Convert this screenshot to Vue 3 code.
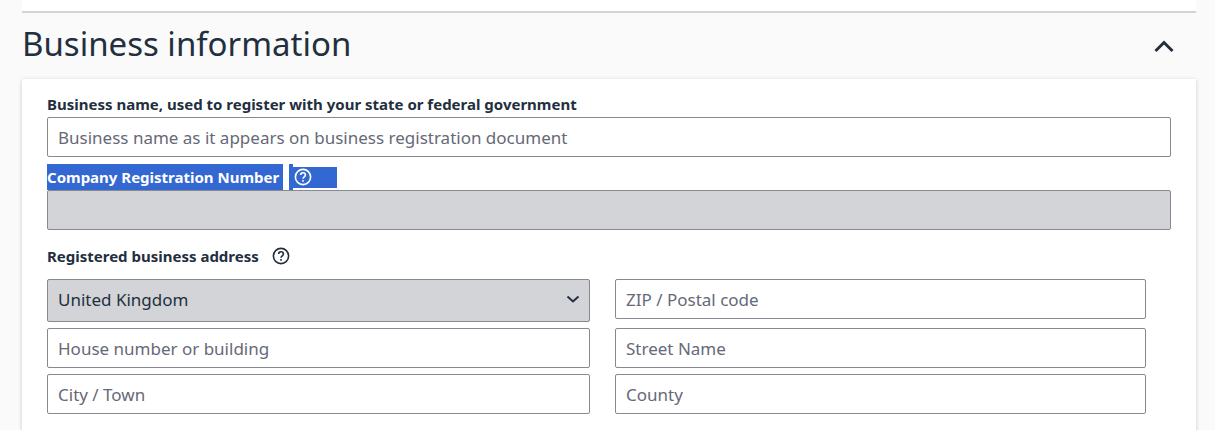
<script setup>
import { ref } from 'vue'

const open = ref(true)
const businessName = ref('')
const country = ref('United Kingdom')
const zip = ref('')
const house = ref('')
const street = ref('')
const city = ref('')
const county = ref('')
</script>

<template>
  <main class="page">
    <div class="previous"></div>
    <header class="heading">
      <h1>Business information</h1>
      <button class="toggle" type="button" aria-label="Toggle section" :aria-expanded="open" @click="open = !open">
        <svg width="24" height="24" viewBox="0 0 24 24"><path d="M3.500 17 12 8.500l8.500 8.500" /></svg>
      </button>
    </header>
    <form v-show="open" class="card" @submit.prevent>
      <label class="label" for="name">Business name, used to register with your state or federal government</label>
      <input id="name" v-model="businessName" class="field" type="text" placeholder="Business name as it appears on business registration document" />

      <div class="label-row">
        <label class="label selected" for="crn">Company Registration Number</label>
        <span class="selected-edge"></span>
        <span class="selected-help">
          <button class="help" type="button" aria-label="Company Registration Number help">
            <svg width="20" height="20" viewBox="0 0 20 20"><circle cx="10" cy="10" r="7.600" /><path d="M7.600 8.100c0-1.500 1-2.400 2.400-2.400s2.400.9 2.400 2.200c0 1.900-2.400 1.900-2.400 3.900" /><path d="M10 13.100v1.700" /></svg>
          </button>
        </span>
      </div>
      <input id="crn" class="field" type="text" disabled />

      <div class="address-row">
        <span id="address" class="label">Registered business address</span>
        <button class="help" type="button" aria-label="Registered business address help">
          <svg width="20" height="20" viewBox="0 0 20 20"><circle cx="10" cy="10" r="7.600" /><path d="M7.600 8.100c0-1.500 1-2.400 2.400-2.400s2.400.9 2.400 2.200c0 1.900-2.400 1.900-2.400 3.900" /><path d="M10 13.100v1.700" /></svg>
        </button>
      </div>
      <div class="address" role="group" aria-labelledby="address">
        <div class="select">
          <select v-model="country" class="field" aria-label="Country" disabled>
            <option>United Kingdom</option>
          </select>
          <svg class="chevron" width="16" height="16" viewBox="0 0 16 16"><path d="m2.500 5.500 5.500 5 5.500-5" /></svg>
        </div>
        <input v-model="zip" class="field" type="text" placeholder="ZIP / Postal code" aria-label="ZIP / Postal code" />
        <input v-model="house" class="field" type="text" placeholder="House number or building" aria-label="House number or building" />
        <input v-model="street" class="field" type="text" placeholder="Street Name" aria-label="Street Name" />
        <input v-model="city" class="field" type="text" placeholder="City / Town" aria-label="City / Town" />
        <input v-model="county" class="field" type="text" placeholder="County" aria-label="County" />
      </div>
    </form>
  </main>
</template>

<style>
html {
  background: #fafafa;
  overflow: hidden;
}
</style>

<style scoped>
.page {
  padding: 0 19px 0 22px;
  color: #232f3e;
  font-family: "Noto Sans", sans-serif;
}
.page * {
  box-sizing: border-box;
}
.previous {
  height: 13px;
  background: #fff;
  border-bottom: 2px solid #d3d4d6;
}
.heading {
  display: flex;
  align-items: center;
  justify-content: space-between;
  height: 66px;
  padding-right: 20px;
}
h1 {
  margin: 0;
  font-size: 33px;
  font-weight: 400;
  line-height: 60px;
  padding-bottom: 4px;
}
button {
  padding: 0;
  border: 0;
  background: none;
  color: inherit;
}
svg {
  display: block;
  fill: none;
  stroke: currentColor;
}
.toggle svg {
  stroke-width: 3;
}
.card {
  padding: 13px 25px 24px;
  background: #fff;
  box-shadow: 0 1px 4px rgba(0, 0, 0, 0.2);
}
.label {
  display: block;
  font-size: 15px;
  font-weight: 700;
  line-height: 25px;
}
.field {
  display: block;
  width: 100%;
  height: 40px;
  padding: 0 10px;
  border: 1px solid #88898e;
  border-radius: 2px;
  background: #fff;
  color: #232f3e;
  font-family: inherit;
  font-size: 17px;
  line-height: 24px;
}
.field::placeholder {
  color: #666978;
  opacity: 1;
}
.field:disabled {
  background: #d3d4d8;
  color: #232f3e;
  opacity: 1;
}
.label-row {
  display: flex;
  align-items: center;
  height: 26px;
  margin-top: 7px;
}
.selected {
  padding-right: 4px;
  background: #3367d1;
  color: #fff;
  line-height: 26px;
}
.selected-edge {
  width: 4px;
  height: 26px;
  margin-left: 6px;
  background: #3367d1;
}
.selected-help {
  width: 44px;
  height: 21px;
  background: #3367d1;
  color: #fff;
}
.help {
  display: block;
}
.help svg {
  stroke-width: 1.6;
}
.address-row {
  display: flex;
  align-items: center;
  gap: 12px;
  height: 24px;
  margin: 14px 0 11px;
}
.address {
  display: grid;
  grid-template-columns: 543fr 531fr;
  gap: 6px 25px;
  padding-right: 25px;
}
.select {
  position: relative;
}
.select .field {
  height: 43px;
  padding-bottom: 2px;
  appearance: none;
}
.chevron {
  position: absolute;
  top: 12px;
  right: 9px;
  stroke-width: 2;
  pointer-events: none;
}
</style>
